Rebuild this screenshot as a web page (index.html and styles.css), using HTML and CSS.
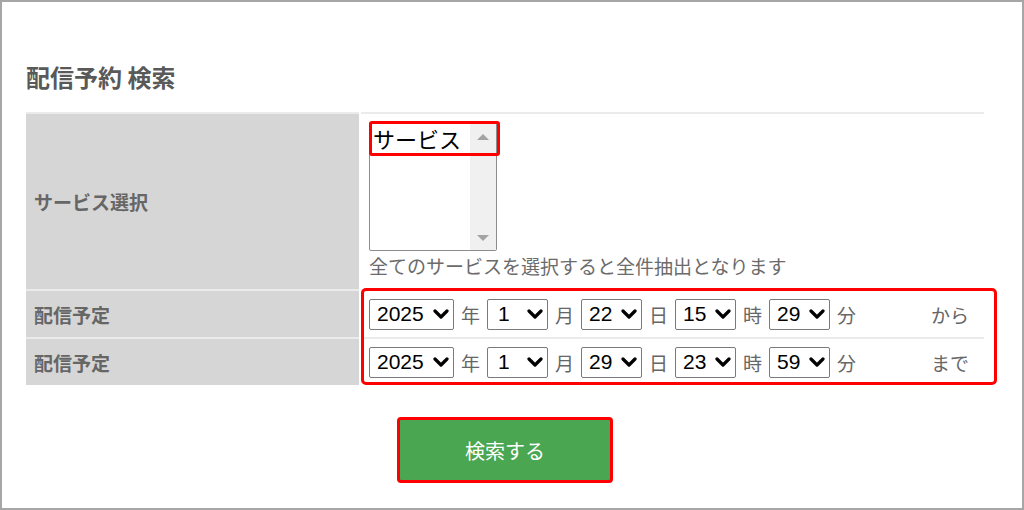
FILE: index.html
```html
<!DOCTYPE html>
<html lang="ja">
<head>
    <meta charset="UTF-8">
    <meta name="viewport" content="width=device-width, initial-scale=1.0">
    <title>配信予約 検索</title>
    <link rel="stylesheet" href="styles.css">
</head>
<body>
    <div class="frame">
        <h2 class="pageTitle">配信予約 検索</h2>

        <div class="searchForm">
            <table class="formTable">
                <tr>
                    <th>サービス選択</th>
                    <td class="serviceCell">
                        <div class="listBox">
                            <div class="listOption">サービス</div>
                            <div class="listScroll">
                                <span class="arrowUp"></span>
                                <span class="arrowDown"></span>
                            </div>
                            <!-- 注釈の赤枠 -->
                            <div class="markOption"></div>
                        </div>
                        <p class="helpText">全てのサービスを選択すると全件抽出となります</p>
                    </td>
                </tr>
                <tr>
                    <th>配信予定</th>
                    <td>
                        <div class="dateRow">
                            <span class="sel wYear"><span>2025</span><svg viewBox="0 0 16 10" width="16" height="10"><path d="M2 2 L8 8 L14 2" /></svg></span>
                            <span class="unit">年</span>
                            <span class="sel"><span class="one">1</span><svg viewBox="0 0 16 10" width="16" height="10"><path d="M2 2 L8 8 L14 2" /></svg></span>
                            <span class="unit">月</span>
                            <span class="sel"><span>22</span><svg viewBox="0 0 16 10" width="16" height="10"><path d="M2 2 L8 8 L14 2" /></svg></span>
                            <span class="unit">日</span>
                            <span class="sel"><span>15</span><svg viewBox="0 0 16 10" width="16" height="10"><path d="M2 2 L8 8 L14 2" /></svg></span>
                            <span class="unit">時</span>
                            <span class="sel"><span>29</span><svg viewBox="0 0 16 10" width="16" height="10"><path d="M2 2 L8 8 L14 2" /></svg></span>
                            <span class="unit">分</span>
                            <span class="rangeWord">から</span>
                        </div>
                    </td>
                </tr>
                <tr>
                    <th>配信予定</th>
                    <td>
                        <div class="dateRow">
                            <span class="sel wYear"><span>2025</span><svg viewBox="0 0 16 10" width="16" height="10"><path d="M2 2 L8 8 L14 2" /></svg></span>
                            <span class="unit">年</span>
                            <span class="sel"><span class="one">1</span><svg viewBox="0 0 16 10" width="16" height="10"><path d="M2 2 L8 8 L14 2" /></svg></span>
                            <span class="unit">月</span>
                            <span class="sel"><span>29</span><svg viewBox="0 0 16 10" width="16" height="10"><path d="M2 2 L8 8 L14 2" /></svg></span>
                            <span class="unit">日</span>
                            <span class="sel"><span>23</span><svg viewBox="0 0 16 10" width="16" height="10"><path d="M2 2 L8 8 L14 2" /></svg></span>
                            <span class="unit">時</span>
                            <span class="sel"><span>59</span><svg viewBox="0 0 16 10" width="16" height="10"><path d="M2 2 L8 8 L14 2" /></svg></span>
                            <span class="unit">分</span>
                            <span class="rangeWord">まで</span>
                        </div>
                    </td>
                </tr>
            </table>
            <!-- 日付行をかこむ赤枠 -->
            <div class="markDates"></div>

            <div class="buttonArea">
                <button class="searchButton">検索する</button>
            </div>
        </div>
    </div>
</body>
</html>
```

FILE: styles.css
```css
body {
    margin: 0;
    font-family: "Noto Sans CJK JP", sans-serif;
    background: #ffffff;
}

.frame {
    box-sizing: border-box;
    width: 1024px;
    height: 510px;
    border: 2px solid #a6a6a6;
    padding: 60px 0 0 24px;
}

.pageTitle {
    margin: 0 0 20px 0;
    font-size: 24px;
    line-height: 30px;
    font-weight: bold;
    color: #595959;
}

.searchForm {
    position: relative;
    width: 958px;
}

.formTable {
    width: 958px;
    border-collapse: collapse;
}

.formTable th,
.formTable td {
    border-top: 2px solid #ebebeb;
    padding: 0;
}

.formTable th {
    width: 325px;
    padding-left: 8px;
    background: #d6d6d6;
    text-align: left;
    font-size: 19px;
    font-weight: bold;
    color: #666666;
    border-right: 2px solid #ffffff;
}

.formTable td {
    height: 46px;
    padding-left: 8px;
}

.formTable td.serviceCell {
    padding: 8px 0 11px 8px;
    vertical-align: top;
}

/* リストボックス */
.listBox {
    position: relative;
    box-sizing: border-box;
    width: 128px;
    height: 129px;
    border: 1px solid #8c8c8c;
    border-radius: 2px;
    display: flex;
}

.listOption {
    flex: 1;
    height: 30px;
    padding-left: 3px;
    font-size: 22px;
    line-height: 30px;
    color: #000000;
}

.listScroll {
    width: 26px;
    background: #f0f0f0;
    display: flex;
    flex-direction: column;
    justify-content: space-between;
    align-items: center;
    padding: 11px 0 9px 0;
}

.arrowUp {
    width: 0;
    height: 0;
    border-left: 6px solid transparent;
    border-right: 6px solid transparent;
    border-bottom: 6px solid #a3a3a3;
}

.arrowDown {
    width: 0;
    height: 0;
    border-left: 6px solid transparent;
    border-right: 6px solid transparent;
    border-top: 6px solid #a3a3a3;
}

.markOption {
    position: absolute;
    top: -2px;
    left: -1px;
    box-sizing: border-box;
    width: 131px;
    height: 35px;
    border: 3px solid #ff0000;
    border-radius: 3px;
}

.helpText {
    margin: 3px 0 0 0;
    font-size: 19px;
    line-height: 24px;
    color: #6b6b6b;
}

/* 日付の選択 */
.dateRow {
    display: flex;
    align-items: center;
    padding-right: 15px;
}

.sel {
    box-sizing: border-box;
    width: 61px;
    height: 31px;
    border: 1px solid #7a7a7a;
    border-radius: 2px;
    display: flex;
    align-items: center;
    padding: 0 4px 0 7px;
    font-family: "Liberation Sans", Arial, sans-serif;
    font-size: 21px;
    color: #000000;
}

.sel.wYear {
    width: 85px;
}

.sel .one {
    padding-left: 3px;
}

.sel svg {
    margin-left: auto;
    fill: none;
    stroke: #000000;
    stroke-width: 3.2;
    stroke-linecap: round;
    stroke-linejoin: round;
}

.unit {
    margin: 0 7px;
    font-size: 19px;
    color: #666666;
}

.rangeWord {
    margin-left: auto;
    font-size: 19px;
    color: #666666;
}

.markDates {
    position: absolute;
    top: 176px;
    left: 335px;
    box-sizing: border-box;
    width: 636px;
    height: 97px;
    border: 3px solid #ff0000;
    border-radius: 5px;
}

.buttonArea {
    text-align: center;
    margin-top: 32px;
}

.searchButton {
    box-sizing: border-box;
    width: 216px;
    height: 66px;
    background: #4aa651;
    border: 3px solid #ff0000;
    border-radius: 4px;
    color: #ffffff;
    font-family: "Noto Sans CJK JP", sans-serif;
    font-size: 20px;
    cursor: pointer;
}
```
